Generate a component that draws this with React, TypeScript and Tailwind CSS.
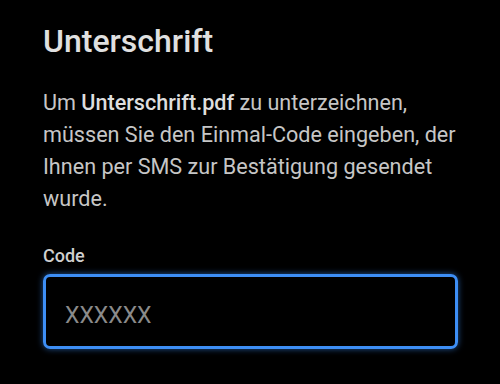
import React from "react";

export default function App() {
  return (
    <div
      className="w-[500px] h-[384px] bg-black overflow-hidden pl-[43px] pr-[42px] pt-[21px]"
      style={{ fontFamily: "Roboto, 'Noto Sans', sans-serif" }}
    >
      <h1 className="text-[32px] leading-[40px] font-medium text-[#e0e0e0]">Unterschrift</h1>
      <p className="mt-[26px] mr-[-4px] text-[21.6px] leading-[32px] text-[#c6c6c6]">
        Um <span className="font-medium text-[#dedede]">Unterschrift.pdf</span> zu unterzeichnen,
        müssen Sie den Einmal-Code eingeben, der Ihnen per SMS zur Bestätigung gesendet wurde.
      </p>
      <label className="block mt-[29px] text-[18px] leading-[24px] font-medium text-[#cfcfcf]">Code</label>
      <div className="mt-[6px] h-[75px] rounded-[7px] border-[3px] border-[#3d8ef5] shadow-[0_0_6px_rgba(59,140,245,0.6)] flex items-center pl-[19px] pt-[7px]">
        <span className="text-[23px] leading-[23px] text-[#8a8a8a]">XXXXXX</span>
      </div>
    </div>
  );
}
